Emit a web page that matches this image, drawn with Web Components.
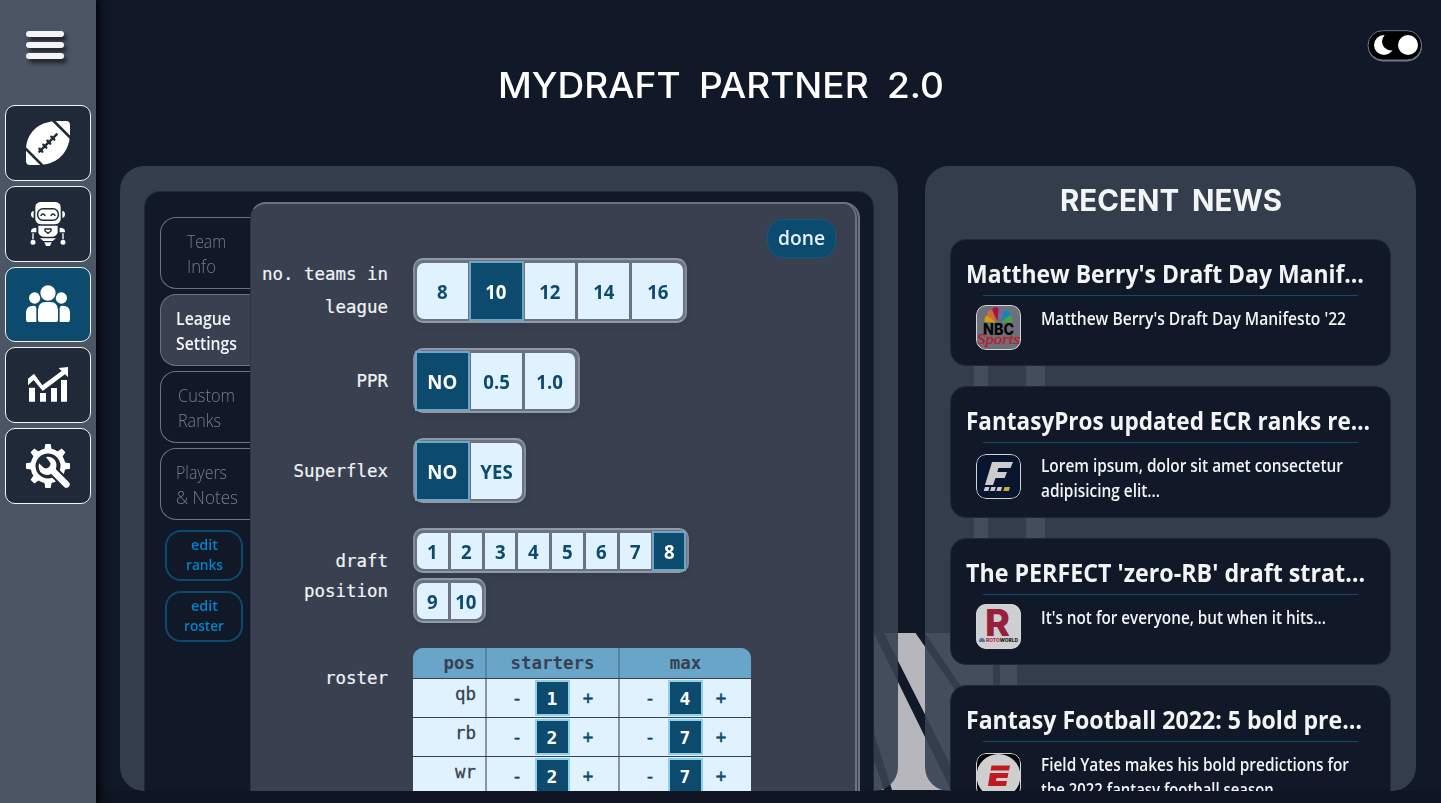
<!DOCTYPE html>
<html lang="en">
<head>
<meta charset="utf-8">
<title>MyDraft Partner 2.0</title>
<style>
html,body{margin:0;height:100%;overflow:hidden;background:#111827}
body{font-family:"Open Sans","Noto Sans",sans-serif;color:#f3f4f6}
</style>
</head>
<body>
<draft-app></draft-app>
<script>
const make = (tag, html, setup) => {
  const t = document.createElement('template');
  customElements.define(tag, class extends HTMLElement {
    constructor() {
      super();
      t.innerHTML = html;
      this.attachShadow({mode: 'open'}).append(t.content.cloneNode(true));
    }
    connectedCallback() { if (setup) setup(this, this.shadowRoot); }
  });
};

const ICONS = {
  ball: `<path fill="#fff" d="M0 132V80C5 35 35 4 88 0H120Q132 0 132 12V45C127 95 97 127 45 132H12Q0 132 0 120Z"/>
    <g stroke="#1f2937" fill="none"><path stroke-width="8" d="M80-3 136 53M-4 80 52 136"/><path stroke-width="7" stroke-linecap="round" d="M40 92 92 40M40 83 49 92M52 71 61 80M64 59 73 68M76 47 85 56"/></g>`,
  robot: `<g fill="#fff"><path d="M28 14Q30 0 46 0H86Q102 0 104 14V52Q102 66 88 67H44Q30 66 28 52Z"/><path d="M23 26v22q-8-2-8-11t8-11zM109 26v22q8-2 8-11t-8-11z"/>
    <path d="M37 71H95V92Q91 102 80 104H52Q41 102 37 92ZM15 88q0-11 16-11v14H15zM117 88q0-11-16-11v14h16zM19 94h4v18h-4zM109 94h4v18h-4zM42 109H90L80 117H52ZM55 121H77L72 132H60Z"/><circle cx="21" cy="121" r="7.500"/><circle cx="111" cy="121" r="7.500"/></g>
    <rect x="35" y="20" width="62" height="35" rx="16" fill="none" stroke="#1f2937" stroke-width="4.500"/><g fill="none" stroke="#1f2937" stroke-width="4"><path d="M44 42q7-12 14 0M74 42q7-12 14 0M57 81h18v6l-9 7-9-7z"/></g>`,
  users: `<g fill="#fff"><circle cx="26" cy="39" r="17"/><circle cx="106" cy="39" r="17"/><path d="M0 104V81Q2 61 24 62Q31 63 31 69V111H8Q0 111 0 104ZM132 104V81Q130 61 108 62Q101 63 101 69V111H124Q132 111 132 104Z"/>
    <circle cx="66" cy="24" r="25" stroke="#0c4a6e" stroke-width="4"/><path d="M36 105V74Q38 51 58 51H74Q94 51 96 74V105Q96 111 90 111H42Q36 111 36 105Z"/></g>`,
  chart: `<g fill="#fff"><path d="M9 74H27V116H9ZM42 90H60V116H42ZM75 75H93V116H75ZM105 51H123V116H105Z"/><path d="M6 47 24 32 49 67 107 24 98 15 126 12V42L117 34 50 84 23 51 6 67Z"/></g>`,
  gear: `<g fill="none" stroke="#fff"><circle cx="66" cy="66" r="45" stroke-width="15"/></g>
    <g fill="#fff"><path d="M54 24 58 0H74L78 24ZM54 108 58 132H74L78 108ZM24 54 0 58V74L24 78ZM108 54 132 58V74L108 78Z"/><path transform="rotate(45 66 66)" d="M54 24 58 0H74L78 24ZM54 108 58 132H74L78 108ZM24 54 0 58V74L24 78Z"/></g>
    <path stroke="#1f2937" stroke-width="32" stroke-linecap="round" d="M84 84 124 124"/><path stroke="#fff" stroke-width="20" stroke-linecap="round" d="M78 78 121 121"/><path fill="#fff" d="M60 39Q77 36 87 49Q94 60 90 74L74 91Q54 97 43 84Q36 73 39 58L54 72Q66 76 71 67Q76 58 71 54Z"/>`
};
const LOGOS = {
  nbc: `<rect width="45" height="45" fill="#6d7078"/><g transform="translate(22.500 18) scale(1.060)"><path fill="#d3a20b" d="M-2-.500-13-1Q-14-6-10-7Z"/><path fill="#d36a37" d="M-2-1-11-7Q-10-13-6-12Z"/><path fill="#b00d3d" d="M-1-2-6-13Q-2-17 0-13Z"/><path fill="#716aa5" d="M1-2 .500-13Q3-17 6-13Z"/><path fill="#0689bf" d="M2-1 6-12Q11-12 11-7Z"/><path fill="#519f45" d="M2-.500 10-7Q14-5 13-1Z"/></g><text x="7" y="30" font-family="Inter" font-weight="800" font-size="15.500" textLength="31" lengthAdjust="spacingAndGlyphs" fill="#050505">NBC</text><text x="1" y="39" font-family="Liberation Serif" font-style="italic" font-size="14" textLength="43" lengthAdjust="spacingAndGlyphs" fill="#b8202c" stroke="#b8202c" stroke-width=".4">Sports</text>`,
  pros: `<rect width="45" height="45" fill="#08152f"/><path fill="#ccc" d="M16 8H37L34.500 14H22.500L21.300 18H31L28.700 24H19.500L17 31H9Z"/><path fill="#ccc" d="M9 33h4.500l-1.200 4H7.700zM15.300 33h4.500l-1.200 4H14zM21.600 33h4.500l-1.200 4h-4.600z"/><path fill="#d1ad24" d="M28.500 33h5.500l-1.200 4h-5.500z"/>`,
  roto: `<rect width="45" height="45" fill="#cfcfd1"/><text x="9" y="32" font-family="Inter" font-weight="800" font-size="37" textLength="25" lengthAdjust="spacingAndGlyphs" fill="#97203a">R</text><path fill="#4b77a8" d="M3 38q0-4 3-4t3 4z"/><text x="10" y="38.300" font-family="Inter" font-weight="800" font-size="5" textLength="32" lengthAdjust="spacingAndGlyphs" fill="#b12d44">ROTO<tspan fill="#222">WORLD</tspan></text>`,
  espn: `<rect width="45" height="45" fill="#050505"/><circle cx="22.500" cy="23" r="22" fill="#cfcfcf"/><path fill="#bd1b22" d="M15.500 12.500H34L33 17.500H14.500ZM14 20H32.500L31.500 25H20.500L20 28H31L30 33H12Z"/>`
};

make('draft-app', `<style>
  :host{display:grid;grid-template-columns:96px minmax(0,1fr);width:1441px;height:803px;position:relative;isolation:isolate;background:#111827}
  main{display:grid;grid-template-rows:166px 625px 12px;min-width:0}
  .cols{display:grid;grid-template-columns:778px 491px;column-gap:27px;padding-left:24px}
  footer{background:#0f1522}
  .mark{position:absolute;inset:0;z-index:-1}
</style>
<svg class="mark" width="1441" height="803" viewBox="0 0 1441 803"><g fill="#b6b6bc">
<path d="M974 366H988V633H974ZM1026 366H1045V633H1026Z"/>
<path d="M884 633H915.500L958 694 993 742V790H963Z"/><path d="M925 633H993V733L950 670ZM1000 633H1017V790H1000Z"/><path d="M874 633 951 790H892L874 733ZM874 760 884 790H874Z"/></g></svg>
<side-nav></side-nav>
<main><page-head></page-head><div class="cols"><settings-panel></settings-panel><news-panel></news-panel></div><footer></footer></main>`);

make('side-nav', `<style>
  :host{display:flex;flex-direction:column;background:#4b5563;box-shadow:2px 0 9px 1px #000;height:803px;z-index:1}
  .menu{height:105px;box-sizing:border-box;padding:31px 0 0 26px}
  .menu div{width:38px;display:flex;flex-direction:column;gap:5.700px;filter:drop-shadow(3px 4px 2px rgba(0,0,0,.6))}
  .menu i{height:5.500px;border-radius:3px;background:#f3f4f6}
  nav{display:flex;flex-direction:column;gap:5px;padding:0 5px}
</style><div class="menu"><div><i></i><i></i><i></i></div></div>
<nav><nav-button icon="ball"></nav-button><nav-button icon="robot"></nav-button><nav-button icon="users" class="on"></nav-button><nav-button icon="chart"></nav-button><nav-button icon="gear"></nav-button></nav>`);

make('nav-button', `<style>
  :host{display:grid;place-items:center;box-sizing:border-box;height:75.750px;border:1px solid #f3f4f6;border-radius:10px;background:#1f2937}
  :host(.on){background:#0c4a6e}
  :host(.on) svg{margin-top:5px}
  svg{display:block;overflow:visible}
</style><svg width="44" height="44" viewBox="0 0 132 132"></svg>`,
(el, r) => r.querySelector('svg').innerHTML = ICONS[el.getAttribute('icon')]);

make('page-head', `<style>
  :host{display:block;position:relative}
  h1{margin:0;padding:64px 0 0 402px;font:500 35px/42px Inter,sans-serif;color:#fff;word-spacing:8px}
  svg{position:absolute;left:1271px;top:29px}
</style><h1><fit-text w="446">MYDRAFT PARTNER 2.0</fit-text></h1>
<svg width="58" height="36" viewBox="0 0 58 36"><rect x="1" y="2.500" width="54" height="30" rx="15" fill="#777c88"/><rect x="1" y="1.700" width="53.500" height="29.300" rx="14.500" fill="#000" stroke="#6b7280"/><circle cx="17" cy="16" r="10" fill="#fff"/><circle cx="24" cy="12.500" r="9" fill="#000"/><circle cx="41" cy="16" r="10" fill="#fff"/></svg>`);

make('side-tab', `<style>
  :host{display:block;box-sizing:border-box;height:72px;width:91px;border:1px solid #6b7280;border-right:0;border-radius:16px 0 0 16px;padding:10px 0 0 var(--in,15px);font-size:18.500px;line-height:25px;font-weight:300;color:#777e8b}
  :host(.on){background:#394151;color:#f3f4f6;font-weight:600}
  ::slotted(*){display:block}
</style><slot></slot>`);

make('edit-button', `<style>
  :host{display:block;box-sizing:border-box;width:78px;height:51px;border:2px solid #0c4a6e;border-radius:16px;text-align:center;font-size:15px;line-height:20px;font-weight:600;color:#0284c7;padding-top:2px;margin:0 0 10px 5px}
  ::slotted(*){display:block;margin:0 auto}
</style><slot></slot>`);

make('button-group', `<style>
  :host{display:flex;box-sizing:border-box;width:max-content;height:var(--h,65px);border:2px solid #9299a5;border-left-color:#858c98;border-right-color:#858c98;border-radius:10px;padding:3px 2.200px 2px 2px;background:#6b7280;gap:3px;box-shadow:0 3px 8px rgba(20,28,40,.12)}
  b{display:grid;place-items:center;box-sizing:border-box;width:var(--w,50.800px);background:#e0f2fe;color:#0c4a6e;font-size:19px;font-weight:700;line-height:1;padding-top:2px}
  b:last-child{border-radius:0 7px 7px 0}
  style+b{border-radius:7px 0 0 7px}
  b.on,style+b.on,b.on:last-child{background:#0c4a6e;color:#fff;box-shadow:0 0 0 2px #6ba5c8;border-radius:0;z-index:1}
  i{display:inline-block;font-style:normal;transform:scaleX(.98)}
</style>`, (el, r) => {
  const on = el.getAttribute('on');
  el.getAttribute('items').split(',').forEach(v => {
    const b = document.createElement('b');
    b.innerHTML = `<i>${v}</i>`;
    if (v === on) b.className = 'on';
    r.append(b);
  });
});

make('form-row', `<style>
  :host{display:grid;grid-template-columns:137px 1fr;column-gap:25px;height:90px}
  .l{font:17.440px/var(--lh,33px) "DejaVu Sans Mono",monospace;text-align:right;padding-top:var(--t,0);-webkit-text-stroke:.2px #f3f4f6}
  .l ::slotted(*){display:block}
  .c{display:flex;flex-direction:column;gap:5px}
</style><div class="l"><slot name="label"></slot></div><div class="c"><slot></slot></div>`);

make('roster-table', `<style>
  :host{display:block;width:337.500px;border-radius:10px 10px 0 0;overflow:hidden;font:17.440px "DejaVu Sans Mono",monospace;color:#374151}
  .r{display:grid;grid-template-columns:72px 131px 131px;column-gap:2px;height:38px;border-top:1px solid #374151;background:#8795a8}
  .r>*{background:#e0f2fe}
  .h{height:30px;border:0;background:#5683a2;font-weight:700}
  .h>*{background:#69a5c9;display:grid;place-items:center;line-height:30px}
  .h>:first-child{justify-content:end;padding-right:10px}
  .p{text-align:right;padding-right:9px;line-height:31px;-webkit-text-stroke:.3px #374151}
  .s{display:grid;grid-template-columns:35px 36px 35px;justify-content:center;color:#0c4a6e;font-weight:700}
  .s>*{display:grid;place-items:center}
  .s>span{font-weight:400;-webkit-text-stroke:.5px #0c4a6e}
  .s b{background:#0c4a6e;color:#fff;border:2px solid #8fd0f0;margin:1px 1px 1px 0;font-size:18px}
</style><div class="r h"><span>pos</span><span>starters</span><span>max</span></div>`, (el, r) => {
  [['qb',1,4],['rb',2,7],['wr',2,7]].forEach(([p, a, b]) => {
    const d = document.createElement('div');
    d.className = 'r';
    const s = n => `<div class="s"><span>-</span><b>${n}</b><span>+</span></div>`;
    d.innerHTML = `<div class="p">${p}</div>${s(a)}${s(b)}`;
    r.append(d);
  });
});

make('settings-panel', `<style>
  :host{display:block;box-sizing:border-box;height:625px;border-radius:24px;background:rgba(55,65,81,.9);overflow:hidden;padding:25px 24px 0}
  .in{display:grid;grid-template-columns:90px 610px;box-sizing:border-box;height:640px;border:1px solid #1f2937;border-radius:16px;background:#111827;padding:10px 13px 0 15px}
  .tabs{display:flex;flex-direction:column;gap:5px;padding-top:15px}
  .tabs edit-button:first-of-type{margin-top:5px}
  .tabs edit-button{margin-bottom:5px}
  .card{position:relative;box-sizing:border-box;height:640px;border-top:2px solid #6b7280;border-left:1px solid #2b3444;border-right:5px double #6b7280;border-radius:16px 16px 0 0;background:#394151;padding:54px 0 0 0}
  .done{position:absolute;right:19px;top:15px;box-sizing:border-box;width:69px;height:39px;border:1px solid #0b5a88;border-radius:16px;background:#0c4a6e;color:#e0f2fe;font-weight:600;font-size:19.500px;line-height:36px;text-align:center}
</style><div class="in"><div class="tabs">
<side-tab style="--in:26px"><fit-text w="39">Team</fit-text><fit-text w="29">Info</fit-text></side-tab>
<side-tab class="on"><fit-text w="55">League</fit-text><fit-text w="61">Settings</fit-text></side-tab>
<side-tab style="--in:17px"><fit-text w="57">Custom</fit-text><fit-text w="43">Ranks</fit-text></side-tab>
<side-tab><fit-text w="51">Players</fit-text><fit-text w="62">&amp; Notes</fit-text></side-tab>
<edit-button><fit-text w="27">edit</fit-text><fit-text w="37">ranks</fit-text></edit-button>
<edit-button><fit-text w="27">edit</fit-text><fit-text w="40">roster</fit-text></edit-button>
</div><div class="card"><div class="done"><fit-text w="47">done</fit-text></div>
<form-row><span slot="label">no. teams in</span><span slot="label">league</span><button-group items="8,10,12,14,16" on="10"></button-group></form-row>
<form-row style="--t:17px"><span slot="label">PPR</span><button-group items="NO,0.5,1.0" on="NO"></button-group></form-row>
<form-row style="--t:17px"><span slot="label">Superflex</span><button-group items="NO,YES" on="NO"></button-group></form-row>
<form-row style="height:120px;--lh:30px;--t:18px"><span slot="label">draft</span><span slot="label">position</span><button-group style="--h:45px;--w:30.800px" items="1,2,3,4,5,6,7,8" on="8"></button-group><button-group style="--h:45px;--w:30.800px" items="9,10"></button-group></form-row>
<form-row style="--lh:30px;--t:15px"><span slot="label">roster</span><roster-table></roster-table></form-row>
</div></div>`);

make('news-card', `<style>
  :host{display:block;box-sizing:border-box;height:var(--ht,127px);border:1px solid #1f2937;border-radius:16px;background:#111827;padding:15px 15px 0;flex:none}
  .t{font-size:25px;font-weight:700;line-height:36px;height:40px}
  hr{margin:0 17px;border:0;border-top:1px solid #0c4a6e}
  .b{display:grid;grid-template-columns:45px 1fr;column-gap:20px;padding:var(--g,9px) 0 0 10px}
  svg{display:block;border-radius:10px}
  .x{font-size:17.500px;line-height:25px;font-weight:600;margin-top:calc(10px - var(--g,9px))}
  .x ::slotted(*){display:block}
</style><div class="t"><slot name="title"></slot></div><hr><div class="b"><svg width="45" height="45" viewBox="0 0 45 45"></svg><div class="x"><slot></slot></div></div>`,
(el, r) => r.querySelector('svg').innerHTML = LOGOS[el.getAttribute('logo')] + '<rect x=".5" y=".5" width="44" height="44" rx="9.500" fill="none" stroke="#d1d5db"/>');

make('news-panel', `<style>
  :host{display:flex;flex-direction:column;gap:20px;box-sizing:border-box;height:625px;border-radius:24px;background:rgba(55,65,81,.9);overflow:hidden;padding:0 25px}
  h2{margin:0;height:53px;padding:15px 0 0 110px;box-sizing:border-box;font:700 30px/38px Inter,sans-serif;word-spacing:6px}
</style><h2><fit-text w="222">RECENT NEWS</fit-text></h2>
<news-card logo="nbc"><fit-text slot="title" w="398">Matthew Berry's Draft Day Manif…</fit-text><fit-text w="305">Matthew Berry's Draft Day Manifesto '22</fit-text></news-card>
<news-card logo="pros" style="--ht:132px;--g:11px"><fit-text slot="title" w="404">FantasyPros updated ECR ranks re…</fit-text><fit-text w="302">Lorem ipsum, dolor sit amet consectetur</fit-text><fit-text w="119">adipisicing elit...</fit-text></news-card>
<news-card logo="roto"><fit-text slot="title" w="399">The PERFECT 'zero-RB' draft strat…</fit-text><fit-text w="285">It's not for everyone, but when it hits...</fit-text></news-card>
<news-card logo="espn" style="--ht:132px;--g:11px"><fit-text slot="title" w="396">Fantasy Football 2022: 5 bold pre…</fit-text><fit-text w="308">Field Yates makes his bold predictions for</fit-text><fit-text w="245">the 2022 fantasy football season...</fit-text></news-card>`);

/* Condenses or widens one line of text to the width in its w attribute. */
make('fit-text', `<style>:host{display:block}span{display:inline-block;white-space:nowrap;transform-origin:0 50%;vertical-align:top}</style><span><slot></slot></span>`,
(el, r) => {
  const s = r.querySelector('span'), w = +el.getAttribute('w');
  el.style.textAlign = 'left';
  const n = s.getBoundingClientRect().width;
  s.style.transform = `scaleX(${w / n})`;
  el.style.width = w + 'px';
  if (el.parentElement && el.parentElement.className === 'done') el.style.margin = '0 auto';
});
</script>
</body>
</html>
